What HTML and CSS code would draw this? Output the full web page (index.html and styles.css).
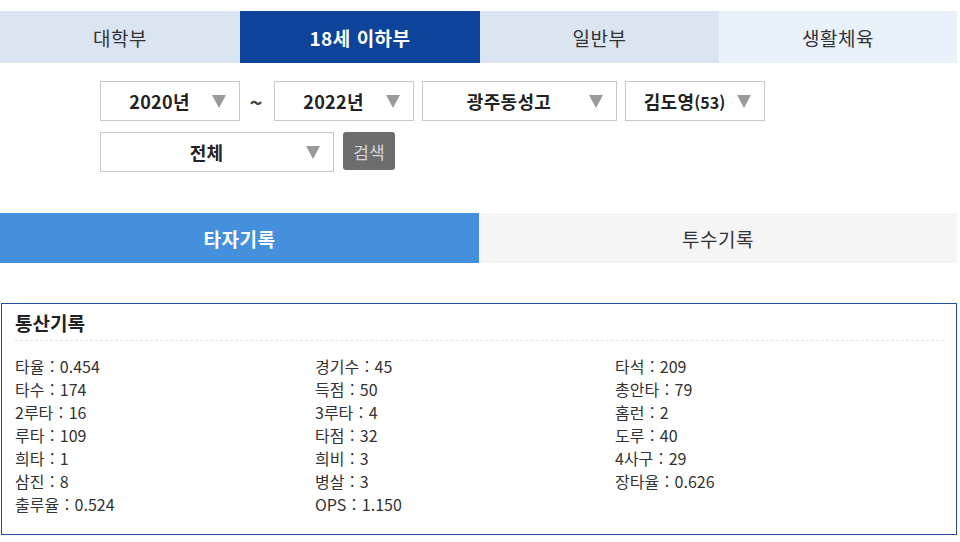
FILE: index.html
```html
<!DOCTYPE html>
<html lang="ko">
<head>
<meta charset="utf-8">
<link rel="stylesheet" href="styles.css">
</head>
<body>
<div class="page">
  <nav class="divisions">
    <div class="div-tab">대학부</div>
    <div class="div-tab active">18세 이하부</div>
    <div class="div-tab">일반부</div>
    <div class="div-tab light">생활체육</div>
  </nav>

  <form class="filters">
    <div class="filter-row">
      <div class="select w140"><span class="label">2020년</span><span class="arrow"></span></div>
      <span class="tilde">~</span>
      <div class="select w140"><span class="label">2022년</span><span class="arrow"></span></div>
      <div class="select w195"><span class="label">광주동성고</span><span class="arrow"></span></div>
      <div class="select w140"><span class="label">김도영<small>(53)</small></span><span class="arrow"></span></div>
    </div>
    <div class="filter-row">
      <div class="select w234"><span class="label">전체</span><span class="arrow"></span></div>
      <button type="button" class="search-btn">검색</button>
    </div>
  </form>

  <nav class="record-tabs">
    <div class="rec-tab active">타자기록</div>
    <div class="rec-tab">투수기록</div>
  </nav>

  <section class="card">
    <h2 class="card-title">통산기록</h2>
    <ul class="stats">
      <li>타율 : 0.454</li><li>경기수 : 45</li><li>타석 : 209</li>
      <li>타수 : 174</li><li>득점 : 50</li><li>총안타 : 79</li>
      <li>2루타 : 16</li><li>3루타 : 4</li><li>홈런 : 2</li>
      <li>루타 : 109</li><li>타점 : 32</li><li>도루 : 40</li>
      <li>희타 : 1</li><li>희비 : 3</li><li>4사구 : 29</li>
      <li>삼진 : 8</li><li>병살 : 3</li><li>장타율 : 0.626</li>
      <li>출루율 : 0.524</li><li>OPS : 1.150</li>
    </ul>
  </section>
</div>
</body>
</html>
```

FILE: styles.css
```css
* { box-sizing: border-box; }
html, body { margin: 0; padding: 0; background: #fff; }
body {
  font-family: "Noto Sans CJK KR", "Noto Sans", sans-serif;
  color: #333;
}
.page {
  width: 957px;
  padding-top: 11px;
}
.divisions {
  display: grid;
  grid-template-columns: 240px 240px 239px 238px;
  height: 52px;
}
.div-tab {
  display: flex;
  align-items: center;
  justify-content: center;
  background: #dae5f1;
  color: #333;
  font-size: 19px;
  letter-spacing: 0.5px;
}
.div-tab.active {
  background: #0d4399;
  color: #fff;
  font-weight: 700;
}
.div-tab.light { background: #e9f1fb; }

.filters {
  margin: 18px 0 0;
  padding-left: 100px;
  display: flex;
  flex-direction: column;
  gap: 11px;
}
.filter-row {
  display: flex;
  align-items: flex-start;
  gap: 8px;
}
.select {
  height: 40px;
  border: 1px solid #c9c9c9;
  background: #fff;
  display: flex;
  align-items: center;
  padding-left: 12px;
  padding-right: 13px;
}
.w140 { width: 140px; }
.w195 { width: 195px; }
.w234 { width: 234px; }
.label {
  flex: 1;
  text-align: center;
  font-weight: 700;
  font-size: 18px;
  color: #222;
  letter-spacing: 0.3px;
  padding-right: 6px;
}
.label small { font-size: 16px; letter-spacing: 0; }
.arrow {
  width: 0; height: 0;
  border-left: 7px solid transparent;
  border-right: 7px solid transparent;
  border-top: 13px solid #9a9a9a;
}
.tilde {
  width: 18px;
  margin: 0 1px 0 -1px;
  line-height: 40px;
  text-align: center;
  font-weight: 700;
  font-size: 22px;
  color: #444;
}
.search-btn {
  width: 52px;
  height: 38px;
  border: 0;
  border-radius: 3px;
  background: #6d6d6d;
  color: #d5d5d5;
  font-family: inherit;
  font-size: 17px;
  padding: 0;
  margin-left: 1px;
}

.record-tabs {
  margin-top: 41px;
  display: grid;
  grid-template-columns: 479px 478px;
  height: 50px;
}
.rec-tab {
  display: flex;
  align-items: center;
  justify-content: center;
  background: #f5f5f5;
  font-size: 19px;
  color: #333;
  letter-spacing: 0.5px;
}
.rec-tab.active {
  background: #4590dc;
  color: #fff;
  font-weight: 700;
}

.card {
  margin: 40px 0 0 1px;
  height: 232px;
  border: 1px solid #1f4e9e;
  padding: 5px 12px 0 13px;
}
.card-title {
  margin: 0;
  font-size: 19px;
  font-weight: 700;
  color: #222;
  line-height: 28px;
  padding-bottom: 3px;
  border-bottom: 1px dashed #e2e2e2;
}
.stats {
  list-style: none;
  margin: 14px 0 0;
  padding: 0;
  display: grid;
  grid-template-columns: 300px 300px 300px;
  grid-auto-rows: 23px;
  font-size: 16px;
  line-height: 23px;
  color: #333;
  word-spacing: 1px;
}
```
